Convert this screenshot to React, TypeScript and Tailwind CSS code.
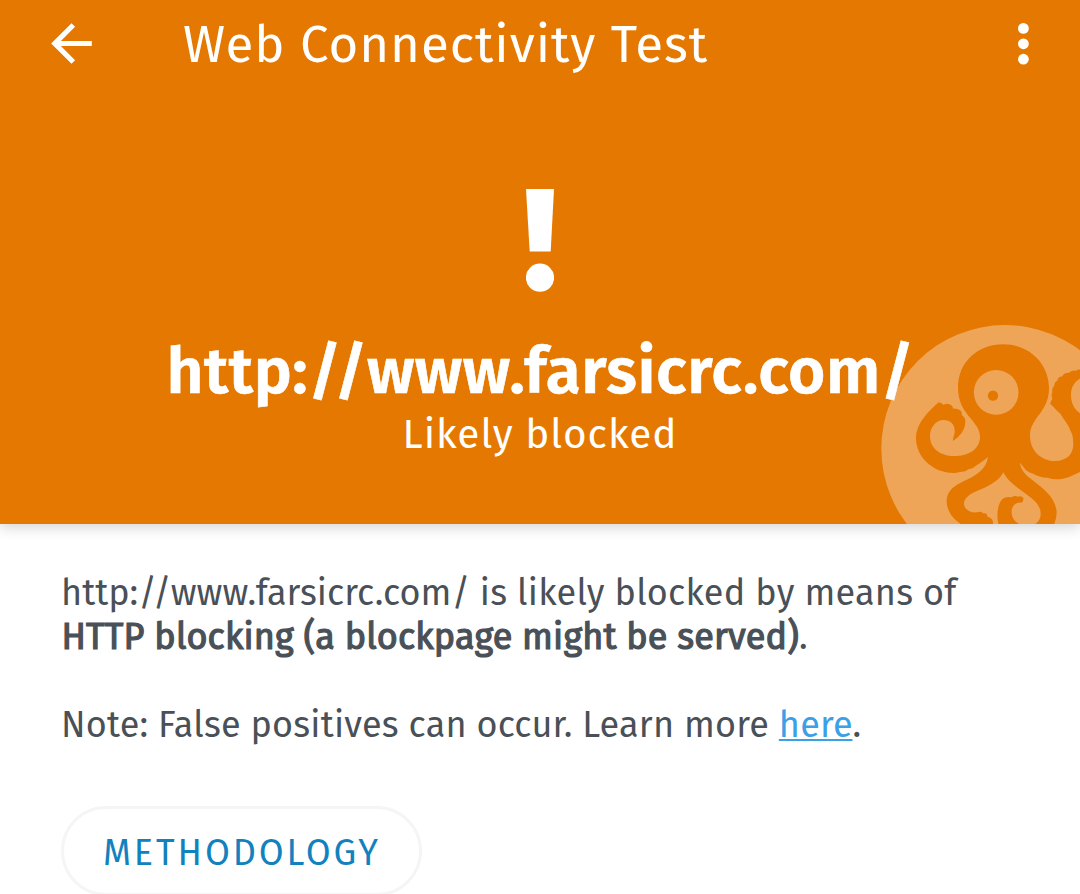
function BackArrow() {
  return (
    <svg viewBox="0 0 24 24" className="size-[61px] fill-white">
      <path d="M20 11H7.83l5.59-5.59L12 4l-8 8 8 8 1.41-1.41L7.83 13H20v-2z" />
    </svg>
  );
}

function MoreDots() {
  return (
    <svg viewBox="0 0 12 44" className="h-[44px] w-[12px] fill-white">
      <circle cx="6.4" cy="6.4" r="5.4" />
      <circle cx="6.4" cy="21.8" r="5.4" />
      <circle cx="6.4" cy="37.2" r="5.4" />
    </svg>
  );
}

function Exclamation() {
  return (
    <svg viewBox="0 0 28 103" className="h-[103px] w-[28px] fill-white">
      <path d="M0 0H28L24.7 62.5H3.7Z" />
      <circle cx="14" cy="88.7" r="14.1" />
    </svg>
  );
}

function Octopus() {
  return (
    <svg viewBox="0 0 630 627" className="absolute right-0 bottom-0 h-[209px] w-[210px]">
      <circle cx="405" cy="401" r="371" fill="#eea557" />
      <path
        fill="#e57800"
        d="M264 218C264 142 322 88 400 88C478 88 537 145 537 220C537 292 480 308 480 362C480 408 515 438 555 438C590 438 611 418 610 385C609 350 603 356 598 338C588 320 578 308 571 296C560 288 553 276 541 267Q540 262 547 252Q543 240 547 231Q545 218 553 212Q553 200 562 197Q564 185 577 184Q582 172 597 173Q606 165 618 167Q624 163 632 164V189C608 204 602 222 603 245C605 270 615 284 632 296V470C614 478 596 489 578 491Q555 496 532 488Q508 487 490 476Q470 472 461 457L450 443C451 463 466 478 480 490C518 519 556 546 560 590Q560 610 553 627H496C507 620 513 608 512 594C510 565 488 552 463 533C434 512 415 500 400 472C388 496 362 510 335 522C305 533 282 547 282 566C282 582 300 595 322 592Q333 588 339 595Q352 592 353 606Q364 606 369 620V627H272C246 610 230 585 230 558C230 526 255 511 282 498C318 481 350 463 354 425C337 442 318 450 308 460Q294 462 286 469Q270 471 255 474C190 476 138 427 138 370C138 326 175 290 206 262Q216 264 220 269Q233 264 241 269Q248 270 249 281Q260 279 269 285Q277 288 275 300Q286 307 286 319C286 346 270 364 249 378C248 366 255 358 254 347C254 326 239 315 221 315C198 315 180 337 180 363C180 400 210 423 252 423C295 423 330 403 330 365C330 316 264 300 264 218Z"
      />
      <path
        fill="#e57800"
        d="M385 627C379 598 383 568 397 552Q408 544 425 547Q435 540 443 545Q456 541 460 550Q461 559 455 563C444 560 426 568 425 588C424 604 431 618 447 627Z"
      />
      <circle cx="378.500" cy="232" r="67" fill="#eea557" />
      <circle cx="369" cy="242" r="15.500" fill="#e57800" />
    </svg>
  );
}

export default function App() {
  return (
    <div className="flex h-[894px] w-[1080px] flex-col overflow-hidden bg-white font-['Fira_Sans','Noto_Sans',sans-serif]">
      <header className="relative h-[524px] shrink-0 bg-[#e57800] text-white shadow-[0_4px_12px_rgba(0,0,0,0.16)]">
        <Octopus />
        <div className="relative flex h-[87px] items-center pr-[51px] pl-[41px]">
          <BackArrow />
          <h1 className="mt-[3px] ml-[81px] text-[51px] leading-[86px] tracking-[0.95px] whitespace-nowrap">Web Connectivity Test</h1>
          <div className="ml-auto">
            <MoreDots />
          </div>
        </div>
        <div className="relative flex flex-col items-center pt-[102px]">
          <Exclamation />
          <div className="mt-[40px] ml-px text-[64px] leading-[80px] font-semibold tracking-[0.52px] whitespace-nowrap [-webkit-text-stroke:0.6px_white]">
            <span>http://www.farsicrc.com/</span>
          </div>
          <div className="-mt-px text-[40.5px] leading-[48px] tracking-[0.95px] whitespace-nowrap">
            <span>Likely blocked</span>
          </div>
        </div>
      </header>

      <main className="flex flex-col items-start pt-[47px] pl-[61px] text-[36px] leading-[44px] whitespace-nowrap text-[#495057]">
        <p>
          <span className="tracking-[0.03px]">http://www.farsicrc.com/</span>{" "}
          <span className="tracking-[0.24px]">is likely blocked by means of</span>
          <br />
          <strong className="ml-[0.5px] font-normal tracking-[0.14px] [-webkit-text-stroke:1.2px_#495057]">
            HTTP blocking (a blockpage might be served)
          </strong>
          .
        </p>
        <p className="mt-[44px] tracking-[0.2px]">
          Note: False positives can occur. Learn more{" "}
          <a href="#" className="text-[#3ba0e6] underline decoration-2 underline-offset-2">
            here
          </a>
          .
        </p>
        <button className="mt-[59px] flex h-[90px] w-[361px] items-center justify-center rounded-full border-[3px] border-[#f5f5f5] text-[#1282be]">
          <span className="mt-[4px] ml-px tracking-[2.9px]">METHODOLOGY</span>
        </button>
      </main>
    </div>
  );
}
